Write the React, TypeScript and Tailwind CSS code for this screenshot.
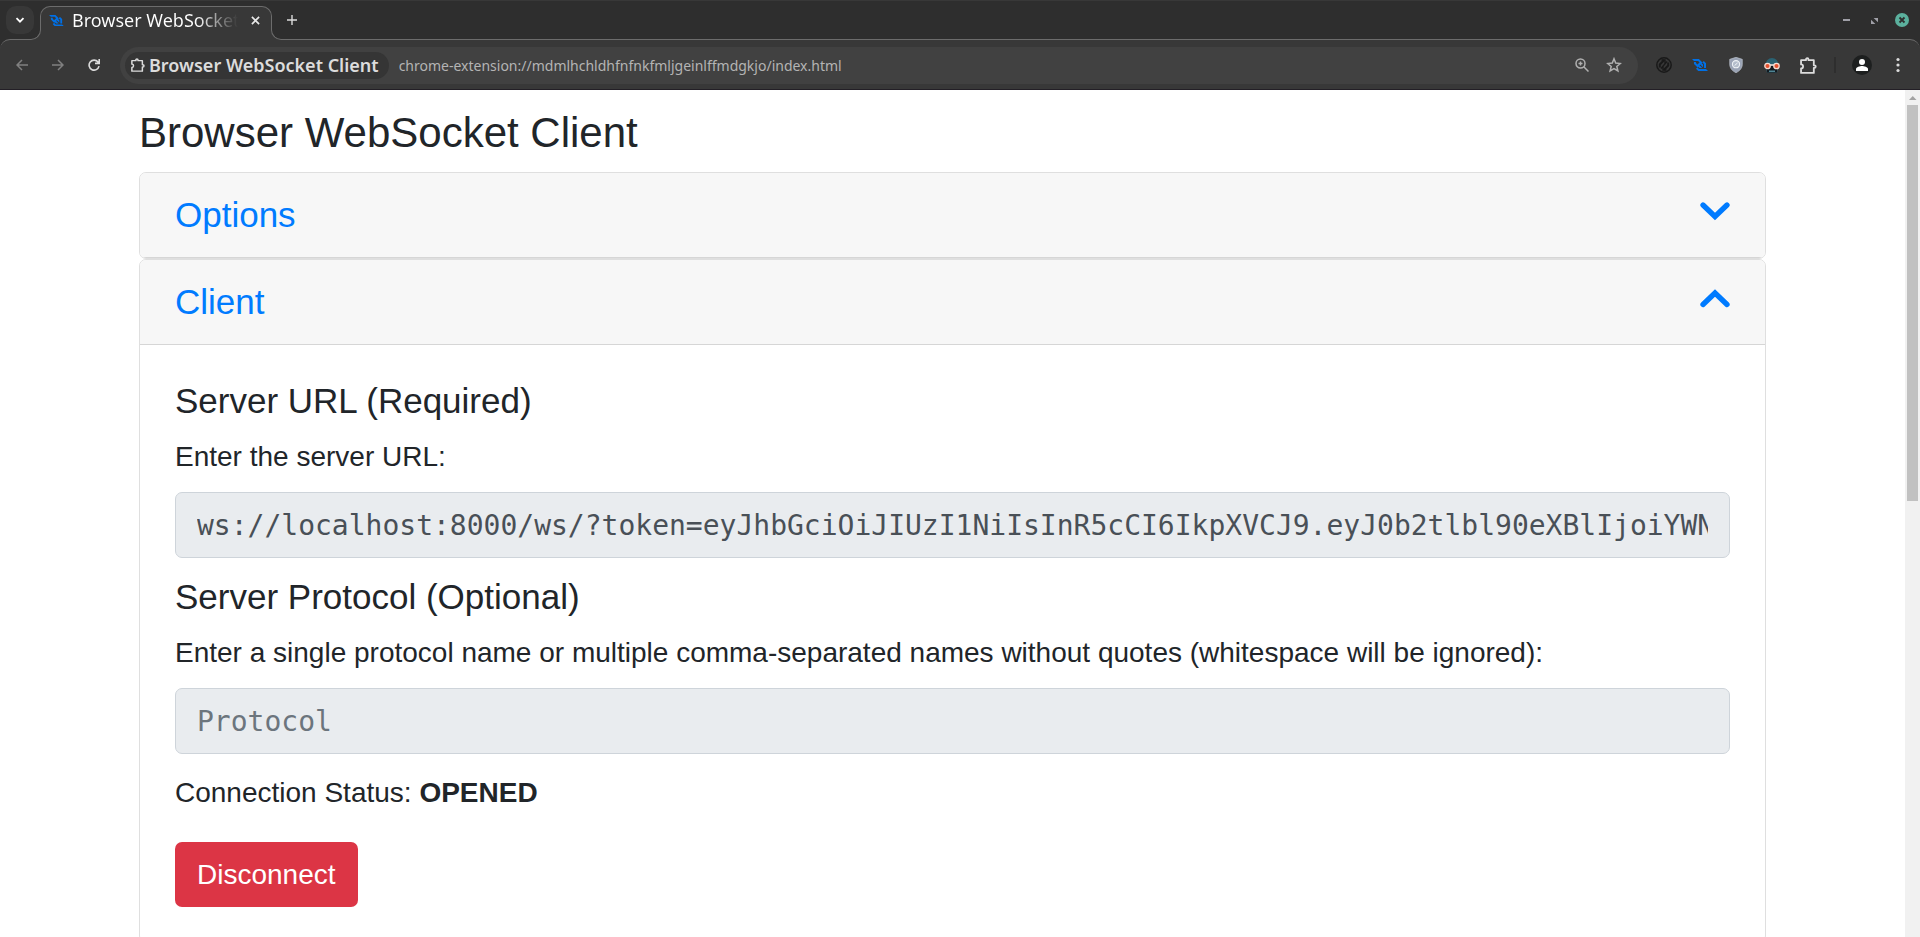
import React, { useState } from "react";

const ICON = "fill-none stroke-current";

function SocketLogo({ className }: { className: string }) {
  return (
    <svg viewBox="0 0 256 193" className={className} fill="#0070e6" aria-hidden="true">
      <path d="M192.44 144.645h31.78V68.339l-35.805-35.804-22.472 22.472 26.497 26.497v63.141zm31.864 15.931H113.452L86.954 134.08l11.237-11.236 21.885 21.885h45.028l-44.357-44.441 11.32-11.32 44.357 44.356V88.296l-21.801-21.801 11.152-11.153L110.685 0H0l31.696 31.696v.084H97.436l23.227 23.227-33.96 33.96L63.476 65.74V47.712h-31.78v31.193l55.007 55.007L64.314 156.3l35.805 35.805H256l-31.696-31.529z" />
    </svg>
  );
}

function PuzzleIcon({ className }: { className: string }) {
  return (
    <svg viewBox="0 0 16 16" className={className} strokeWidth="1.7" aria-hidden="true">
      <path d="M1 3h4.600V2.400a1.200 1.200 0 0 1 2.400 0V3h5v4.800h.6a1.200 1.200 0 0 1 0 2.400H13V15H1v-4.200a1.900 1.900 0 0 0 0-3.800z" className={ICON} strokeLinejoin="round" />
    </svg>
  );
}

function TabStrip() {
  return (
    <div className="flex h-[39px] items-stretch border-t border-[#383838]">
      <div className="flex items-center px-[6px]">
        <button aria-label="Search tabs" className="flex size-7 items-center justify-center rounded-[10px] bg-[#383838] text-white">
          <svg viewBox="0 0 10 10" className="size-[10px]" strokeWidth="1.8" aria-hidden="true">
            <path d="M1.500 3.200 5 6.700 8.500 3.200" className={ICON} />
          </svg>
        </button>
      </div>
      <div className="relative z-10 -mb-px mt-[5px] flex w-[232px] items-center rounded-t-[10px] border border-b-0 border-[#6c6c6c] bg-[#383838] px-2 pb-[6px]">
        <span className="absolute -left-[10px] bottom-0 size-[10px] bg-[#383838]">
          <span className="block size-full rounded-br-[10px] border-b border-r border-[#6c6c6c] bg-[#2e2e2e]" />
        </span>
        <span className="absolute -right-[10px] bottom-0 size-[10px] bg-[#383838]">
          <span className="block size-full rounded-bl-[10px] border-b border-l border-[#6c6c6c] bg-[#2e2e2e]" />
        </span>
        <SocketLogo className="w-[15px]" />
        <span className="ml-2 w-[166px] overflow-hidden whitespace-nowrap bg-linear-to-r from-white from-75% to-transparent bg-clip-text text-[18px] text-transparent">
          Browser WebSocket Client
        </span>
        <button aria-label="Close tab" className="ml-[13px] text-[#e8e8e8]">
          <svg viewBox="0 0 10 10" className="size-[9px]" strokeWidth="1.8" aria-hidden="true">
            <path d="M1 1l8 8M9 1l-8 8" className={ICON} />
          </svg>
        </button>
      </div>
      <div className="flex flex-1 items-center justify-between pl-[15px] pr-1">
        <button aria-label="New tab" className="text-[#dcdcdc]">
          <svg viewBox="0 0 10 10" className="size-[10px]" strokeWidth="1.4" aria-hidden="true">
            <path d="M5 0v10M0 5h10" className={ICON} />
          </svg>
        </button>
        <div className="flex items-center text-[#a0a0a8]">
          <button aria-label="Minimize" className="flex h-7 w-7 items-center justify-center">
            <span className="h-[2px] w-[7px] bg-current" />
          </button>
          <button aria-label="Restore" className="flex h-7 w-7 items-center justify-center">
            <svg viewBox="0 0 8 8" className="size-[7px]" fill="currentColor" aria-hidden="true">
              <path d="M3 1h5v5zM0 3v5h5z" />
            </svg>
          </button>
          <button aria-label="Close window" className="flex h-7 w-7 items-center justify-center">
            <span className="flex size-[14px] items-center justify-center rounded-full bg-[#5bb09d] text-[#2e2e2e]">
              <svg viewBox="0 0 8 8" className="size-[8px]" strokeWidth="1.8" aria-hidden="true">
                <path d="M1.500 1.500l5 5M6.500 1.500l-5 5" className={ICON} />
              </svg>
            </span>
          </button>
        </div>
      </div>
    </div>
  );
}

const EXTENSION = "flex h-7 w-9 items-center justify-center";

function Toolbar() {
  return (
    <div className="flex h-[51px] items-center rounded-t-[10px] border-t border-[#6c6c6c] bg-[#383838] pl-4 pr-5 text-[#dcdcdc] shadow-[inset_0_-1px_0_#231f26]">
      <div className="flex w-[104px] items-center gap-6">
        <button aria-label="Back" className="text-[#808080]">
          <svg viewBox="0 0 12 12" className="size-3" strokeWidth="1.500" aria-hidden="true">
            <path d="M12 6H1M6 1 1 6l5 5" className={ICON} />
          </svg>
        </button>
        <button aria-label="Forward" className="text-[#808080]">
          <svg viewBox="0 0 12 12" className="size-3" strokeWidth="1.500" aria-hidden="true">
            <path d="M0 6h11M6 1l5 5-5 5" className={ICON} />
          </svg>
        </button>
        <button aria-label="Reload">
          <svg viewBox="0 0 12 12" className="size-3" strokeWidth="1.600" aria-hidden="true">
            <path d="M11 7.200A5 5 0 1 1 10 3l1 1M11.200 0v4.400H7" className={ICON} />
          </svg>
        </button>
      </div>
      <div className="flex h-[37px] flex-1 items-center rounded-full bg-[#414141] pl-[5px] pr-4">
        <button className="flex h-[27px] items-center gap-1 whitespace-nowrap rounded-full bg-[#353535] pl-[6px] pr-[10px] text-[18px] font-semibold">
          <PuzzleIcon className="size-[14px]" />
          Browser WebSocket Client
        </button>
        <input
          aria-label="Address"
          className="ml-[10px] min-w-0 flex-1 bg-transparent text-[14px] text-[#b4b4b4] outline-none"
          defaultValue="chrome-extension://mdmlhchldhfnfnkfmljgeinlffmdgkjo/index.html"
        />
        <div className="flex items-center gap-4 text-[#b0b0b0]">
          <button aria-label="Zoom" className="flex size-4 items-center justify-center">
            <svg viewBox="0 0 14 14" className="size-[14px]" strokeWidth="1.500" aria-hidden="true">
              <path d="M5.500 1a4.500 4.500 0 1 1 0 9a4.500 4.500 0 0 1 0-9M9 9l4.500 4.500M5.500 3.500v4M3.500 5.500h4" className={ICON} />
            </svg>
          </button>
          <button aria-label="Bookmark">
            <svg viewBox="0 0 16 16" className="size-4" strokeWidth="1.500" aria-hidden="true">
              <path d="M8 1.800l1.700 4.300 4.600.4-3.500 3 1.100 4.500L8 11.600l-3.900 2.400 1.100-4.500-3.500-3 4.600-.4z" className={ICON} />
            </svg>
          </button>
        </div>
      </div>
      <div className="ml-2 flex items-center">
        <button aria-label="Refresh blocker" className={EXTENSION}>
          <svg viewBox="0 0 16 16" className="size-4" fill="none" stroke="#191919" aria-hidden="true">
            <circle cx="8" cy="8" r="7.200" strokeWidth="1.500" />
            <path d="M3.800 10.500V7.500L8 3.300M12.200 5.500v3L8 12.700" strokeWidth="2" />
            <path d="M5.500 3H9v3.500M10.500 13H7V9.500M5 11.500l6-7" strokeWidth="1.300" />
          </svg>
        </button>
        <button aria-label="WebSocket client" className={EXTENSION}>
          <SocketLogo className="w-4" />
        </button>
        <button aria-label="Shield" className={EXTENSION}>
          <svg viewBox="0 0 14 16" className="h-4 w-[14px]" aria-hidden="true">
            <path d="M7 .3l6.300 2v5c0 4-3 7-6.300 8.400C3.700 14.300.7 11.300.7 7.300v-5z" fill="#9aa3b5" stroke="#c3c9d3" strokeWidth=".6" />
            <circle cx="7" cy="7.200" r="3.600" fill="#b4bdcb" stroke="#eef2f6" strokeWidth="1.100" />
            <path d="M5.600 8.500l3-2.600" stroke="#eef2f6" />
          </svg>
        </button>
        <button aria-label="Reader" className={EXTENSION}>
          <svg viewBox="0 0 16 16" className="size-4" aria-hidden="true">
            <path d="M1.500 8a6.500 7 0 0 1 13 0l-1.500 7.500H3z" fill="#2a6272" />
            <path d="M3 9h10v6.500H3z" fill="#131a20" />
            <path d="M5 15v-1.500h6V15z" fill="#4f8594" />
            <path d="M6 8h4" stroke="#f6e4dc" strokeWidth="1.500" />
            <circle cx="3.500" cy="9" r="2.700" fill="#e4512f" stroke="#f6dcd2" strokeWidth="1.300" />
            <circle cx="12.500" cy="9" r="2.700" fill="#e4512f" stroke="#f6dcd2" strokeWidth="1.300" />
          </svg>
        </button>
        <button aria-label="Extensions" className={EXTENSION}>
          <PuzzleIcon className="size-[17px]" />
        </button>
      </div>
      <div className="ml-2 h-4 w-[2px] bg-[#2e2e2e]" />
      <button aria-label="Profile" className="ml-4 flex size-5 items-center justify-center rounded-full bg-[#1d1f1f]">
        <svg viewBox="0 0 12 12" className="size-3" fill="white" aria-hidden="true">
          <circle cx="6" cy="3" r="3" />
          <path d="M0 12v-2c0-2 4-3 6-3s6 1 6 3v2z" />
        </svg>
      </button>
      <button aria-label="Menu" className="ml-6">
        <svg viewBox="0 0 4 16" className="h-4 w-1" fill="currentColor" aria-hidden="true">
          <circle cx="2" cy="2.500" r="1.600" />
          <circle cx="2" cy="8" r="1.600" />
          <circle cx="2" cy="13.500" r="1.600" />
        </svg>
      </button>
    </div>
  );
}

function Panel({ title, open, onToggle, children }: { title: string; open: boolean; onToggle: () => void; children?: React.ReactNode }) {
  return (
    <section className="overflow-hidden rounded-[7px] border border-[#dfdfdf]">
      <h2 className="border-b border-[#d6d6d6] bg-[#f7f7f7] text-[35px] leading-[42px]">
        <button onClick={onToggle} aria-expanded={open} className="flex w-full items-start justify-between px-[35px] py-[21px] text-[#007bff]">
          {title}
          <svg viewBox="0 0 30 20" className="mt-2 h-5 w-[30px]" strokeWidth="5.300" strokeLinecap="round" aria-hidden="true">
            <path d={open ? "M3 15.500 15 4l12 11.500" : "M3 3l12 11.500L27 3"} className={ICON} />
          </svg>
        </button>
      </h2>
      {open && children}
    </section>
  );
}

const FIELD =
  "mt-[14px] block h-[66px] w-full rounded-[7px] border border-[#ced4da] bg-[#e9ecef] px-[21px] font-['DejaVu_Sans_Mono',monospace] text-[28px] text-[#495057] placeholder:text-[#6c757d]";

export default function App() {
  const [panel, setPanel] = useState("client");
  const toggle = (name: string) => setPanel(panel === name ? "" : name);

  return (
    <div className="flex h-screen flex-col overflow-hidden bg-white">
      <header className="shrink-0 bg-[#2e2e2e] font-['Noto_Sans',sans-serif]">
        <TabStrip />
        <Toolbar />
      </header>
      <div className="flex min-h-0 flex-1">
        <main className="min-w-0 flex-1 overflow-hidden font-['Liberation_Sans',Arial,sans-serif] text-[28px] leading-[42px] text-[#212529]">
          <div className="mx-auto max-w-[1627px] pt-[18px]">
            <h1 className="mb-[14px] text-[42px] leading-[50px]">Browser WebSocket Client</h1>
            <Panel title="Options" open={panel === "options"} onToggle={() => toggle("options")} />
            <Panel title="Client" open={panel === "client"} onToggle={() => toggle("client")}>
              <div className="p-[35px]">
                <h3 className="mb-[14px] text-[35px]">Server URL (Required)</h3>
                <label htmlFor="url" className="block">Enter the server URL:</label>
                <input
                  id="url"
                  disabled
                  className={FIELD}
                  defaultValue="ws://localhost:8000/ws/?token=eyJhbGciOiJIUzI1NiIsInR5cCI6IkpXVCJ9.eyJ0b2tlbl90eXBlIjoiYWNjZXNz"
                />
                <h3 className="mb-[14px] mt-[18px] text-[35px]">Server Protocol (Optional)</h3>
                <label htmlFor="protocol" className="block">
                  Enter a single protocol name or multiple comma-separated names without quotes (whitespace will be ignored):
                </label>
                <input id="protocol" disabled placeholder="Protocol" className={FIELD} />
                <p className="mb-7 mt-[18px]">
                  Connection Status: <strong>OPENED</strong>
                </p>
                <button className="h-[65px] rounded-[7px] bg-[#dc3545] px-[22px] text-white">Disconnect</button>
              </div>
            </Panel>
          </div>
        </main>
        <div className="flex w-[15px] flex-col items-center bg-[#f1f1f1]" aria-hidden="true">
          <svg viewBox="0 0 15 15" className="size-[15px]" fill="#a3a3a3">
            <path d="M4 10h7.500L7.750 6z" />
          </svg>
          <div className="h-[46.7%] w-[11px] bg-[#c1c1c1]" />
        </div>
      </div>
    </div>
  );
}
